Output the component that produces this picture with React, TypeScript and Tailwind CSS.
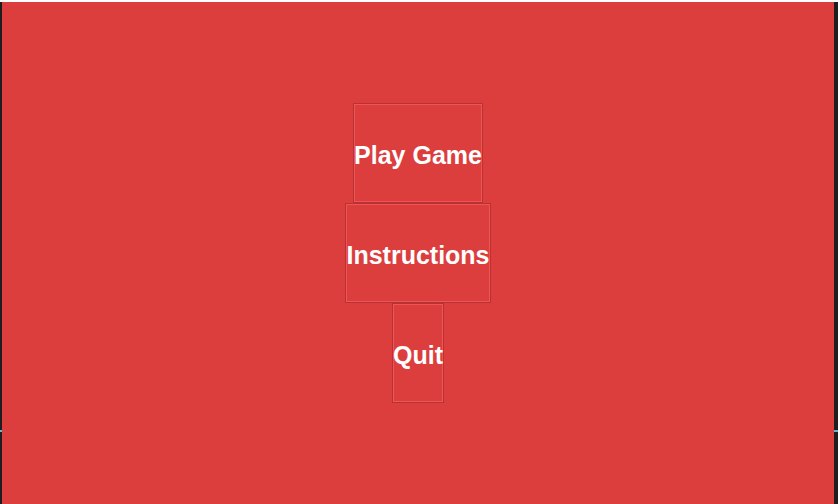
export default function App() {
  const items = ["Play Game", "Instructions", "Quit"];

  return (
    <div className="w-[838px] h-[504px] flex flex-col bg-white overflow-hidden" style={{ fontFamily: '"Liberation Sans", Arial, sans-serif' }}>
      <div className="h-[2px] bg-white" />
      <div className="flex flex-1">
        <div className="w-[2px] bg-[#1e1e1e] flex flex-col">
          <div className="h-[428px]" />
          <div className="h-[2px] bg-[#5fb7d0]" />
        </div>
        <main className="flex-1 bg-[#dc3e3d] flex flex-col items-center pt-[101px]">
          {items.map((label) => (
            <button
              key={label}
              className="h-[100px] px-0 pt-[4px] border border-[#b73232] shadow-[inset_0_0_0_1px_#f05454] bg-[#dc3e3d] text-white text-[25px] font-bold leading-none"
            >
              {label}
            </button>
          ))}
        </main>
        <div className="w-[4px] bg-[#1e1e1e] flex flex-col">
          <div className="h-[428px]" />
          <div className="h-[2px] bg-[#5fb7d0]" />
        </div>
      </div>
    </div>
  );
}
